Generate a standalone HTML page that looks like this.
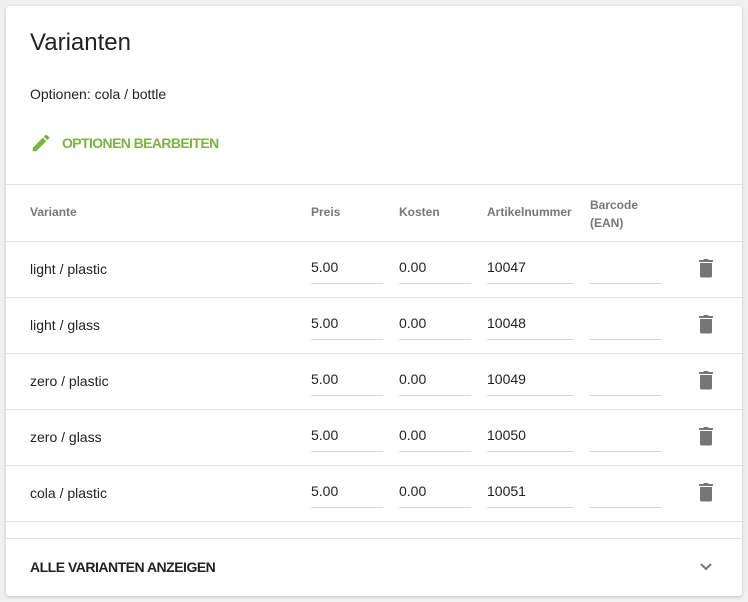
<!DOCTYPE html>
<html><head><style>
*{box-sizing:border-box;margin:0;padding:0}
body{width:748px;height:602px;background:#f0f0f0;font-family:"Liberation Sans",sans-serif;position:relative;overflow:hidden}
.card{position:absolute;left:6px;top:6px;width:736px;height:590px;background:#fff;border-radius:3px;box-shadow:0 1px 3px rgba(0,0,0,.2)}
.a{position:absolute;white-space:nowrap}
.line{position:absolute;left:6px;width:736px;height:1px;background:#e2e2e2}
.h{font-size:12px;color:#777;font-weight:bold}
.t{font-size:14px;color:#222}
.u{position:absolute;height:1px;background:#d8d8d8}
</style></head><body>
<div class="card"></div>
<div class="a" style="left:30px;top:29px;font-size:24px;color:#222">Varianten</div>
<div class="a t" style="left:30px;top:86px">Optionen: cola / bottle</div>
<svg class="a" style="left:30px;top:132px" width="22" height="22" viewBox="0 0 24 24"><path fill="#7cb342" d="M3 17.25V21h3.75L17.81 9.94l-3.75-3.75L3 17.25zM20.71 7.04a1 1 0 0 0 0-1.41l-2.34-2.34a1 1 0 0 0-1.41 0l-1.83 1.83 3.75 3.75 1.83-1.83z"/></svg>
<div class="a" style="left:62px;top:135px;font-size:14px;font-weight:bold;color:#7cb342;letter-spacing:-0.6px">OPTIONEN BEARBEITEN</div>
<div class="line" style="top:184px"></div>
<div class="a h" style="left:30px;top:205px">Variante</div>
<div class="a h" style="left:311px;top:205px">Preis</div>
<div class="a h" style="left:399px;top:205px">Kosten</div>
<div class="a h" style="left:487px;top:205px">Artikelnummer</div>
<div class="a h" style="left:590px;top:196px;line-height:18px">Barcode<br>(EAN)</div>
<div class="line" style="top:241px"></div>

<div id="rows"></div>
<script>
var d=[["light / plastic","10047"],["light / glass","10048"],["zero / plastic","10049"],["zero / glass","10050"],["cola / plastic","10051"]];
var h="";
d.forEach(function(r,i){var y=241+i*56;
h+='<div class="a t" style="left:30px;top:'+(y+20)+'px">'+r[0]+'</div>';
h+='<div class="a t" style="left:311px;top:'+(y+18)+'px">5.00</div>';
h+='<div class="a t" style="left:399px;top:'+(y+18)+'px">0.00</div>';
h+='<div class="a t" style="left:487px;top:'+(y+18)+'px">'+r[1]+'</div>';
h+='<div class="u" style="left:311px;width:72px;top:'+(y+42)+'px"></div>';
h+='<div class="u" style="left:399px;width:72px;top:'+(y+42)+'px"></div>';
h+='<div class="u" style="left:487px;width:87px;top:'+(y+42)+'px"></div>';
h+='<div class="u" style="left:590px;width:72px;top:'+(y+42)+'px"></div>';
h+='<svg class="a" style="left:697px;top:'+(y+17)+'px" width="18" height="20" viewBox="0 0 18 20"><path fill="#757575" d="M3 5h12v13a1.5 1.5 0 0 1-1.5 1.5h-9A1.5 1.5 0 0 1 3 18zM2 2h4l1-1h4l1 1h4v2H2z"/></svg>';
h+='<div class="line" style="top:'+(y+56)+'px"></div>';});
document.getElementById("rows").innerHTML=h;
</script>
<div class="line" style="top:538px"></div>
<div class="a" style="left:30px;top:559px;font-size:14px;font-weight:bold;color:#222;letter-spacing:-0.5px">ALLE VARIANTEN ANZEIGEN</div>
<svg class="a" style="left:699px;top:561px" width="14" height="12" viewBox="0 0 14 12"><path d="M2 3l5 5 5-5" fill="none" stroke="#777" stroke-width="2"/></svg>
</body></html>
